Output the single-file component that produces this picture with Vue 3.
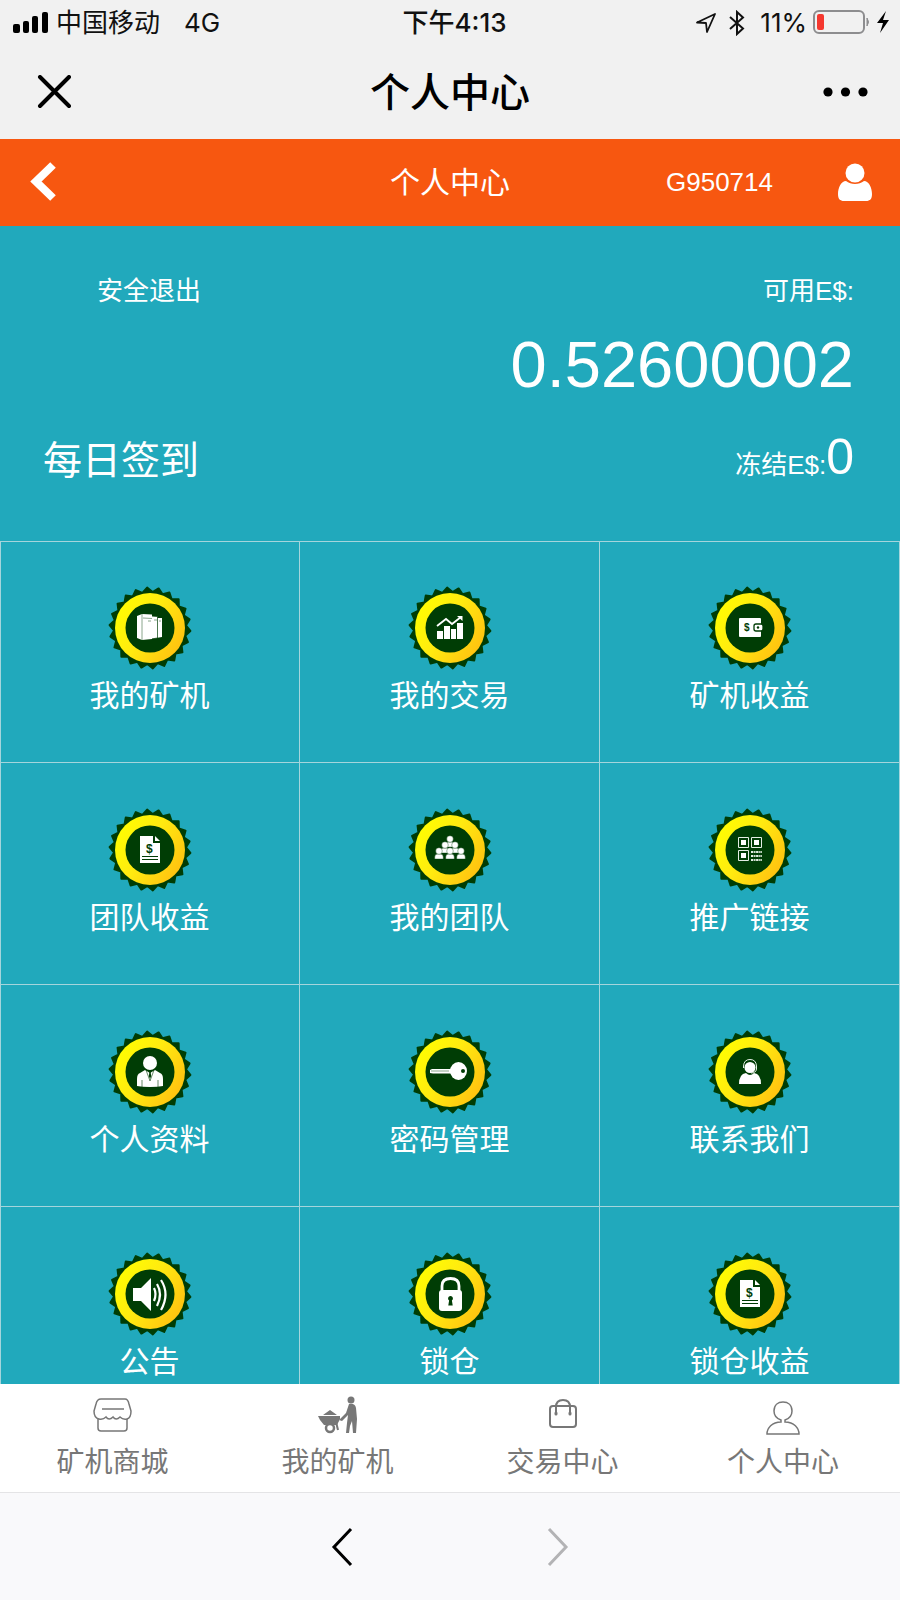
<template>
  <div class="page">
    <div class="status-bar">
      <div class="status-left">
        <svg class="signal" width="36" height="24" viewBox="0 0 36 24">
          <rect x="0" y="13" width="7" height="9" rx="2" />
          <rect x="10" y="10" width="6" height="12" rx="2" />
          <rect x="19" y="5" width="6" height="17" rx="2" />
          <rect x="29" y="1" width="6" height="21" rx="2" />
        </svg>
        <span>中国移动</span>
        <span class="network">4G</span>
      </div>
      <div class="status-time">下午4:13</div>
      <div class="status-right">
        <svg width="22" height="22" viewBox="0 0 22 22">
          <path d="M2 10.5 L20 2 L12 20 L11 11 Z" fill="none" stroke="#111" stroke-width="1.8" stroke-linejoin="round" />
        </svg>
        <svg class="bluetooth" width="16" height="26" viewBox="0 0 16 26">
          <path d="M1 7 L14 18.5 L8 24 V2 L14 7.5 L1 19" fill="none" stroke="#111" stroke-width="2" />
        </svg>
        <span class="percent">11%</span>
        <svg width="78" height="26" viewBox="0 0 78 26">
          <rect x="1" y="1" width="50" height="22" rx="5" fill="none" stroke="#8d8d8f" stroke-width="2" />
          <rect x="4" y="4" width="7" height="16" rx="2" fill="#f5382f" />
          <path d="M54 8 q3 4 0 8 Z" fill="#8d8d8f" stroke="#8d8d8f" />
          <path d="M73 1 L64 13 H70 L67 23 L76 10 H70 Z" fill="#000" />
        </svg>
      </div>
    </div>

    <div class="nav-bar">
      <button class="nav-btn" aria-label="关闭">
        <svg width="40" height="36" viewBox="0 0 40 36">
          <path d="M8 2 L37 31 M37 2 L8 31" stroke="#000" stroke-width="4" stroke-linecap="round" />
        </svg>
      </button>
      <h1 class="nav-title">个人中心</h1>
      <button class="nav-btn nav-more" aria-label="更多">
        <svg width="46" height="14" viewBox="0 0 46 14">
          <circle cx="6" cy="6" r="4.6" />
          <circle cx="23.5" cy="6" r="4.6" />
          <circle cx="41" cy="6" r="4.6" />
        </svg>
      </button>
    </div>

    <header class="header">
      <button class="nav-btn" aria-label="返回">
        <svg width="30" height="44" viewBox="0 0 30 44">
          <path d="M26 4 L9 20.5 L26 37" fill="none" stroke="#fff" stroke-width="8" />
        </svg>
      </button>
      <h2 class="header-title">个人中心</h2>
      <div class="header-user">
        <span>G950714</span>
        <svg width="36" height="40" viewBox="0 0 36 40">
          <circle cx="18" cy="10" r="9.5" fill="#fff" />
          <path d="M9 18 C4 18 1 25 1 31 C1 36 3 38 7 38 H29 C33 38 35 36 35 31 C35 25 32 18 27 18 C22 22 14 22 9 18 Z" fill="#fff" />
        </svg>
      </div>
    </header>

    <main class="content">
      <section class="wallet">
        <div class="wallet-row">
          <a href="#" class="logout">安全退出</a>
          <span>可用E$:</span>
        </div>
        <div class="balance">0.52600002</div>
        <div class="wallet-row frozen-row">
          <a href="#" class="sign-in">每日签到</a>
          <span>冻结E$:<span class="frozen">0</span></span>
        </div>
      </section>

      <nav class="menu">
        <a v-for="item in menu" :key="item.label" href="#" class="menu-item">
          <svg class="badge" viewBox="0 0 84 84">
            <defs>
              <linearGradient id="gold" x1="0" y1="0.2" x2="1" y2="0.8">
                <stop offset="0" stop-color="#ffff00" />
                <stop offset="0.45" stop-color="#ffea10" />
                <stop offset="1" stop-color="#ffbe10" />
              </linearGradient>
            </defs>
            <path :d="teeth" fill="#003d05" stroke="#003d05" stroke-width="2" stroke-linejoin="round" />
            <circle cx="42" cy="42" r="35" fill="url(#gold)" />
            <circle cx="42" cy="42" r="24.5" fill="#003d05" />

            <g v-if="item.icon === 'machine'" fill="#fff">
              <path d="M48 32 L54 32 V51 L48 52 Z" />
              <path d="M43 30 L49.5 30.5 V52 L43 53 Z" stroke="#003d05" stroke-width="0.7" />
              <path d="M29 30 L34 28 L44 28.5 V53 L34 54 L29 52 Z" />
              <path d="M34 28 V54 M35 32 L44 32.5 M40 35 H43 M46 34 H49 M51 35 H53" fill="none" stroke="#6d8f70" stroke-width="0.8" />
            </g>

            <g v-else-if="item.icon === 'trade'" fill="#fff">
              <path d="M29 45 h6 v8 h-6 Z M36 40 h6 v13 h-6 Z M43 43 h5 v10 h-5 Z M49 37 h6 v16 h-6 Z" />
              <path d="M29 40 L38 33 L44 38 L53 31" fill="none" stroke="#fff" stroke-width="1.8" />
              <path d="M49 30 H54.5 V35 Z" />
            </g>

            <g v-else-if="item.icon === 'wallet'" fill="#fff">
              <rect x="31" y="32" width="22" height="19" rx="1" />
              <text x="36" y="45" class="wallet-sign">$</text>
              <rect x="46" y="38" width="9" height="7" rx="2" stroke="#003d05" stroke-width="1.3" />
              <circle cx="50" cy="41.5" r="1.2" fill="#003d05" />
            </g>

            <g v-else-if="item.icon === 'bill'" fill="#fff">
              <path d="M32 28 H45 V35 H52 V55 H32 Z" />
              <path d="M47 28 L52 33 H47 Z" />
              <text x="38" y="45" class="bill-sign">$</text>
              <path d="M34 48.5 H50 M34 51.5 H50" stroke="#003d05" stroke-width="1.2" />
            </g>

            <g v-else-if="item.icon === 'team'" fill="#fff" stroke="#003d05" stroke-width="0.4">
              <template v-for="p in people" :key="p.join()">
                <path :d="`M${p[0] - 4.3} ${p[1] + 8} v-2 q0 -3 3 -3 h2.6 q3 0 3 3 v2 Z`" />
                <circle :cx="p[0]" :cy="p[1]" r="3.3" />
              </template>
            </g>

            <g v-else-if="item.icon === 'qr'">
              <path d="M30.5 29.5 h10 v10 h-10 Z M43.5 29.5 h10 v10 h-10 Z M30.5 42.5 h10 v10 h-10 Z" fill="none" stroke="#e4eee4" />
              <path d="M33 32 h5 v5 h-5 Z M46 32 h5 v5 h-5 Z M33 45 h5 v5 h-5 Z" fill="#fff" />
              <path d="M43 44 H54 M43 48 H54 M43 52 H54" stroke="#e4eee4" stroke-width="1.8" stroke-dasharray="2.4 0.7 1.4 0.6" />
            </g>

            <g v-else-if="item.icon === 'profile'" fill="#fff">
              <circle cx="42" cy="33" r="7" />
              <path d="M37 40 L42 43 L47 40 L52 43 Q55 44 55 49 V56 Q50 57 42 57 Q34 57 29 56 V49 Q29 44 32 43 Z" />
              <path d="M38 40 L42 51 L46 40 M34 50 V57 M50 50 V57" fill="none" stroke="#003d05" stroke-width="0.6" />
              <path d="M41.4 42 h1.2 l0.6 4 l-1.2 3 l-1.2 -3 Z" fill="#003d05" />
            </g>

            <g v-else-if="item.icon === 'key'" fill="#fff">
              <path d="M22 40 L24 39 H43 V43.5 H25 L22 43 Z" />
              <ellipse cx="50.5" cy="41" rx="8.5" ry="9" />
              <circle cx="55" cy="41" r="2" fill="#003d05" />
              <path d="M23 41 H41" stroke="#56835b" stroke-width="0.7" />
            </g>

            <g v-else-if="item.icon === 'service'" fill="#fff">
              <path d="M31 54 Q31 44 38 43 Q42 47 46 43 Q53 44 53 54 Z" />
              <circle cx="42" cy="37.5" r="5.5" />
              <path d="M35.5 38 V36 Q36 29.5 42 29.5 Q48 29.5 48.5 36 V39 Q48 43 43 43" fill="none" stroke="#e4eee4" stroke-width="1" />
            </g>

            <g v-else-if="item.icon === 'notice'" fill="#fff">
              <path d="M25 36 H33 L43 26 V59 L33 49 H25 Z" />
              <path d="M46 36 Q49 42 46 49 M49 32 Q55 42 49 54 M53 28 Q62 42 53 58" fill="none" stroke="#fff" stroke-width="2.2" />
            </g>

            <g v-else-if="item.icon === 'lock'" fill="#fff">
              <path d="M34 40 V34 Q34 26.5 42.5 26.5 Q51 26.5 51 34 V40" fill="none" stroke="#fff" stroke-width="2.8" />
              <rect x="31" y="38" width="23" height="21" rx="3" />
              <path d="M42.5 44 a2.4 2.4 0 0 1 1.4 4.4 l0.8 5 h-4.4 l0.8 -5 A2.4 2.4 0 0 1 42.5 44 Z" fill="#003d05" />
            </g>
          </svg>
          <span class="menu-label">{{ item.label }}</span>
        </a>
      </nav>
    </main>

    <nav class="tab-bar">
      <a href="#" class="tab">
        <svg width="40" height="40" viewBox="0 0 40 40" fill="none" stroke="#777" stroke-width="1.5">
          <path d="M8 4 H32 Q35 4 36 9 L38 16 Q38 23 34 24 Q30 25 27 22 Q23 26 20 22 Q16 26 13 22 Q10 25 6 24 Q1 23 1 16 L3 9 Q4 4 8 4 Z" />
          <path d="M5 24 V33 Q5 36 8 36 H31 Q34 36 34 33 V24 M9 14 H31" />
        </svg>
        <span>矿机商城</span>
      </a>
      <a href="#" class="tab">
        <svg width="40" height="40" viewBox="0 0 40 40" fill="#777">
          <circle cx="33" cy="5" r="3.5" />
          <path d="M31 9 Q37 8 38 13 L39 24 L38 38 H35 L34 26 L32 31 L31 38 H28 L29 28 L30 20 L24 26 L21 25 L28 18 Z" />
          <path d="M5 20 L12 15 L19 20 Z M0 21 H22 V24 L19 30 H6 L2 25 Z" />
          <path d="M18 27 L20 35" stroke="#777" stroke-width="2" />
          <circle cx="12" cy="33" r="4" fill="#fff" stroke="#777" stroke-width="2.5" />
        </svg>
        <span>我的矿机</span>
      </a>
      <a href="#" class="tab">
        <svg width="40" height="40" viewBox="0 0 40 40" fill="none" stroke="#777" stroke-width="2">
          <rect x="7" y="11" width="26" height="21" rx="3" />
          <path d="M13 19 V12 Q13 5 20 5 Q27 5 27 12 V19" />
          <path d="M13 18 v1 M27 18 v1" stroke-width="3" stroke-linecap="round" />
        </svg>
        <span>交易中心</span>
      </a>
      <a href="#" class="tab">
        <svg width="40" height="40" viewBox="0 0 40 40" fill="none" stroke="#777" stroke-width="1.5">
          <path d="M18 27 V25 C12 23 11 19 11 16 C11 10 15 7 20 7 C25 7 29 10 29 16 C29 19 28 23 22 25 V27 C31 27 36 33 36 39 H4 C4 33 9 27 18 27 Z" />
        </svg>
        <span>个人中心</span>
      </a>
    </nav>

    <footer class="browser-bar">
      <button class="nav-btn" aria-label="后退">
        <svg width="24" height="40" viewBox="0 0 24 40">
          <path d="M21 2 L4 20 L21 38" fill="none" stroke="#000" stroke-width="3" />
        </svg>
      </button>
      <button class="nav-btn" aria-label="前进" disabled>
        <svg width="24" height="40" viewBox="0 0 24 40">
          <path d="M3 2 L20 20 L3 38" fill="none" stroke="#b3b3b5" stroke-width="3" />
        </svg>
      </button>
    </footer>
  </div>
</template>

<script setup>
const menu = [
  { label: '我的矿机', icon: 'machine' },
  { label: '我的交易', icon: 'trade' },
  { label: '矿机收益', icon: 'wallet' },
  { label: '团队收益', icon: 'bill' },
  { label: '我的团队', icon: 'team' },
  { label: '推广链接', icon: 'qr' },
  { label: '个人资料', icon: 'profile' },
  { label: '密码管理', icon: 'key' },
  { label: '联系我们', icon: 'service' },
  { label: '公告', icon: 'notice' },
  { label: '锁仓', icon: 'lock' },
  { label: '锁仓收益', icon: 'bill' },
];

// 团队图标里每个人头的位置
const people = [[42, 31], [37, 37], [47, 37], [31, 43], [42, 43], [53, 43]];

// 徽章外圈的锯齿
const buildTeeth = (count) => {
  const points = [];
  for (let i = 0; i < count * 2; i++) {
    const radius = i % 2 === 0 ? 40.5 : 36;
    const angle = (Math.PI * (i - 0.5)) / count - Math.PI / 2;
    points.push(`${(42 + radius * Math.cos(angle)).toFixed(2)} ${(42 + radius * Math.sin(angle)).toFixed(2)}`);
  }
  return `M${points.join(' L')} Z`;
};

const teeth = buildTeeth(22);
</script>

<style>
body {
  margin: 0;
}
</style>

<style scoped>
.page {
  display: flex;
  flex-direction: column;
  height: 100vh;
  font-family: "Liberation Sans", "Noto Sans CJK SC", sans-serif;
  background: #f9f9fb;
}

a {
  color: inherit;
  text-decoration: none;
}

svg {
  display: block;
  flex-shrink: 0;
}

h1,
h2 {
  margin: 0;
}

.nav-btn {
  padding: 0;
  border: none;
  background: none;
  cursor: pointer;
  justify-self: start;
}

/* 状态栏 */
.status-bar {
  display: grid;
  grid-template-columns: 1fr auto 1fr;
  align-items: center;
  height: 46px;
  padding: 0 4px 0 13px;
  background: #f1f1f1;
  color: #111;
  font-family: Inter, "Noto Sans CJK SC", sans-serif;
  font-size: 26px;
  line-height: 46px;
  white-space: nowrap;
}

.status-left,
.status-right {
  display: flex;
  align-items: center;
}

.status-right {
  justify-content: flex-end;
  padding-right: 5px;
}

.signal {
  margin-right: 7px;
}

.network {
  margin-left: 24px;
}

.status-time {
  font-weight: 500;
}

.bluetooth {
  margin: 0 15px 0 12px;
}

.percent {
  margin-right: 6px;
}

/* 标题栏 */
.nav-bar {
  display: grid;
  grid-template-columns: 1fr auto 1fr;
  align-items: center;
  height: 93px;
  padding: 0 32px;
  background: #f1f1f1;
}

.nav-title {
  font-size: 40px;
  line-height: 60px;
  font-weight: 500;
}

.nav-more {
  justify-self: end;
}

.header {
  display: grid;
  grid-template-columns: 1fr auto 1fr;
  align-items: center;
  height: 87px;
  padding: 0 27px;
  background: #f75710;
  color: #fff;
}

.header-title {
  font-size: 30px;
  line-height: 40px;
  font-weight: 400;
}

.header-user {
  display: flex;
  align-items: center;
  justify-content: flex-end;
  gap: 64px;
  font-size: 26px;
}

/* 账户信息 */
.content {
  flex: 1;
  min-height: 0;
  overflow-y: auto;
  scrollbar-width: none;
  background: #21a9bc;
  color: #fff;
}

.wallet {
  box-sizing: border-box;
  height: 315px;
  padding: 45px 46px 0 43px;
  font-size: 26px;
}

.wallet-row {
  display: flex;
  justify-content: space-between;
  line-height: 40px;
}

.logout {
  margin-left: 54px;
}

.balance {
  font-size: 65px;
  line-height: 76px;
  margin-top: 16px;
  text-align: right;
}

.frozen-row {
  align-items: baseline;
  line-height: 60px;
  margin-top: 24px;
}

.sign-in {
  font-size: 39px;
}

.frozen {
  font-size: 50px;
}

/* 功能菜单 */
.menu {
  display: grid;
  grid-template-columns: repeat(3, 1fr);
  box-shadow: inset 1px 1px #a5d5dc;
}

.menu-item {
  box-sizing: border-box;
  display: flex;
  flex-direction: column;
  align-items: center;
  gap: 6px;
  height: 222px;
  padding-top: 45px;
  border-right: 1px solid #a5d5dc;
  border-bottom: 1px solid #a5d5dc;
}

.badge {
  width: 84px;
  height: 84px;
}

.wallet-sign,
.bill-sign {
  fill: #003d05;
  font-family: "Liberation Sans", sans-serif;
  font-size: 10px;
  font-weight: 700;
}

.bill-sign {
  font-size: 12px;
}

.menu-label {
  font-size: 30px;
  line-height: 40px;
}

/* 底部标签 */
.tab-bar {
  display: grid;
  grid-template-columns: 25% 25% 25% 24%;
  height: 108px;
  background: #fff;
  border-bottom: 1px solid #e4e4e6;
  color: #777;
}

.tab {
  display: flex;
  flex-direction: column;
  align-items: center;
  gap: 8px;
  padding-top: 11px;
  font-size: 28px;
  line-height: 40px;
}

.browser-bar {
  display: flex;
  align-items: center;
  justify-content: center;
  gap: 192px;
  height: 107px;
  padding-right: 1px;
}
</style>
